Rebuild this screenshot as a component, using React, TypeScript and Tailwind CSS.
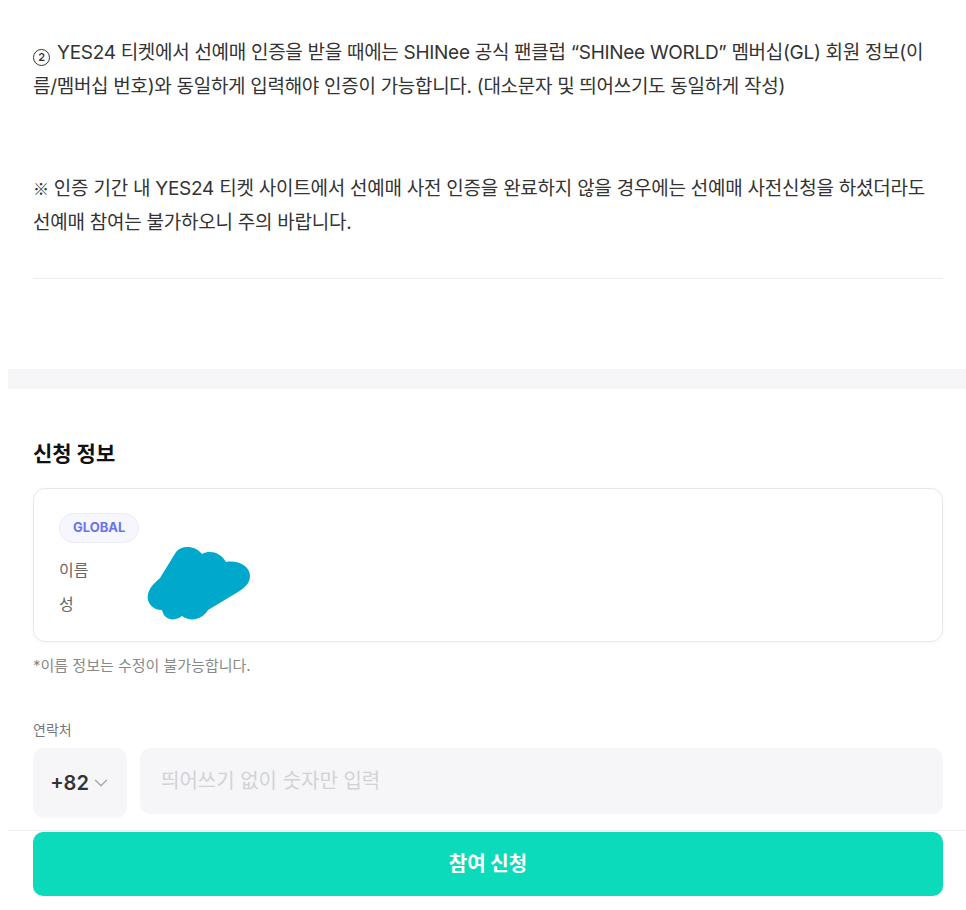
import { ChevronDown } from 'lucide-react'

const font = { fontFamily: 'Inter, "Noto Sans CJK KR", sans-serif' }

function Redaction() {
  return (
    <svg width="110" height="80" viewBox="0 0 110 80" className="absolute left-[112px] top-[55px]">
      <path
        d="M30 8 C36 0 50 2 56 10 C64 6 74 8 80 18 C92 16 104 22 104 32 C104 40 98 44 92 48 L62 66 C56 76 44 78 36 72 C28 78 18 76 16 66 C6 66 0 58 2 50 C4 42 10 38 14 34 Z"
        fill="#00a9cc"
      />
    </svg>
  )
}

export default function App() {
  return (
    <div className="min-h-screen bg-white pl-2 text-[#333]" style={font}>
      {/* Notice text */}
      <div className="pl-[25px] pr-[23px] pt-[36px]">
        <p className="text-[19px] leading-[34px] tracking-[-0.3px]">
          <span className="mr-[2px] inline-flex h-[17px] w-[17px] items-center justify-center rounded-full border-[1.5px] border-[#333] align-[-2px] text-[11px] font-semibold leading-none">2</span>{' '}
          YES24 티켓에서 선예매 인증을 받을 때에는 SHINee 공식 팬클럽 “SHINee WORLD” 멤버십(GL) 회원 정보(이름/멤버십 번호)와 동일하게 입력해야 인증이 가능합니다. (대소문자 및 띄어쓰기도 동일하게 작성)
        </p>
        <p className="mt-[68px] text-[19px] leading-[34px] tracking-[-0.25px]">
          <span style={{ fontFamily: '"Noto Sans CJK KR", sans-serif' }} className="text-[16px] leading-none">※</span> 인증 기간 내 YES24 티켓 사이트에서 선예매 사전 인증을 완료하지 않을 경우에는 선예매 사전신청을 하셨더라도 선예매 참여는 불가하오니 주의 바랍니다.
        </p>
        <div className="mt-[38px] h-px bg-[#ececec]" />
      </div>

      <div className="mt-[90px] h-5 bg-[#f6f6f8]" />

      {/* Application info */}
      <div className="pl-[25px] pr-[23px] pt-[51px] pb-[140px]">
        <h2 className="text-[21px] font-bold leading-[28px] text-[#111]">신청 정보</h2>

        <div className="relative mt-[20px] rounded-[12px] border border-[#e8e8e8] px-[25px] pt-[24px] pb-[20px] shadow-[0_1px_4px_rgba(0,0,0,0.04)]">
          <span className="inline-flex h-[30px] items-center rounded-full border border-[#ececf8] bg-[#f6f6ff] px-[13px] text-[13px] font-bold text-[#6a72f0]">
            GLOBAL
          </span>
          <div className="mt-[10px] text-[16px] leading-[34px] text-[#666]">
            <div>이름</div>
            <div>성</div>
          </div>
          <Redaction />
        </div>

        <p className="mt-[13px] text-[15px] text-[#888]">*이름 정보는 수정이 불가능합니다.</p>

        <p className="mt-[41px] text-[14px] text-[#777]">연락처</p>
        <div className="mt-[8px] flex gap-[13px]">
          <div className="flex h-[70px] w-[94px] items-center justify-center gap-[6px] rounded-[10px] bg-[#f6f6f8] pl-[2px]">
            <span className="text-[20px] font-semibold text-[#333]">+82</span>
            <ChevronDown size={22} strokeWidth={1.6} className="-ml-[5px] text-[#aaa]" />
          </div>
          <div className="flex h-[66px] flex-1 items-center rounded-[10px] bg-[#f6f6f8] px-[21px] text-[20px] text-[#d2d2d6]">
            띄어쓰기 없이 숫자만 입력
          </div>
        </div>
      </div>

      {/* Bottom fixed action */}
      <div className="fixed bottom-0 left-2 right-0 border-t border-[#f0f0f0] bg-white pl-[25px] pr-[23px] pt-[1px] pb-[14px]">
        <div className="pointer-events-none absolute -top-[17px] left-0 right-0 h-4 bg-gradient-to-t from-white/90 to-white/0" />
        <button className="flex h-[64px] w-full items-center justify-center rounded-[10px] bg-[#0bdbba] text-[20px] font-bold text-white">
          참여 신청
        </button>
      </div>
    </div>
  )
}
